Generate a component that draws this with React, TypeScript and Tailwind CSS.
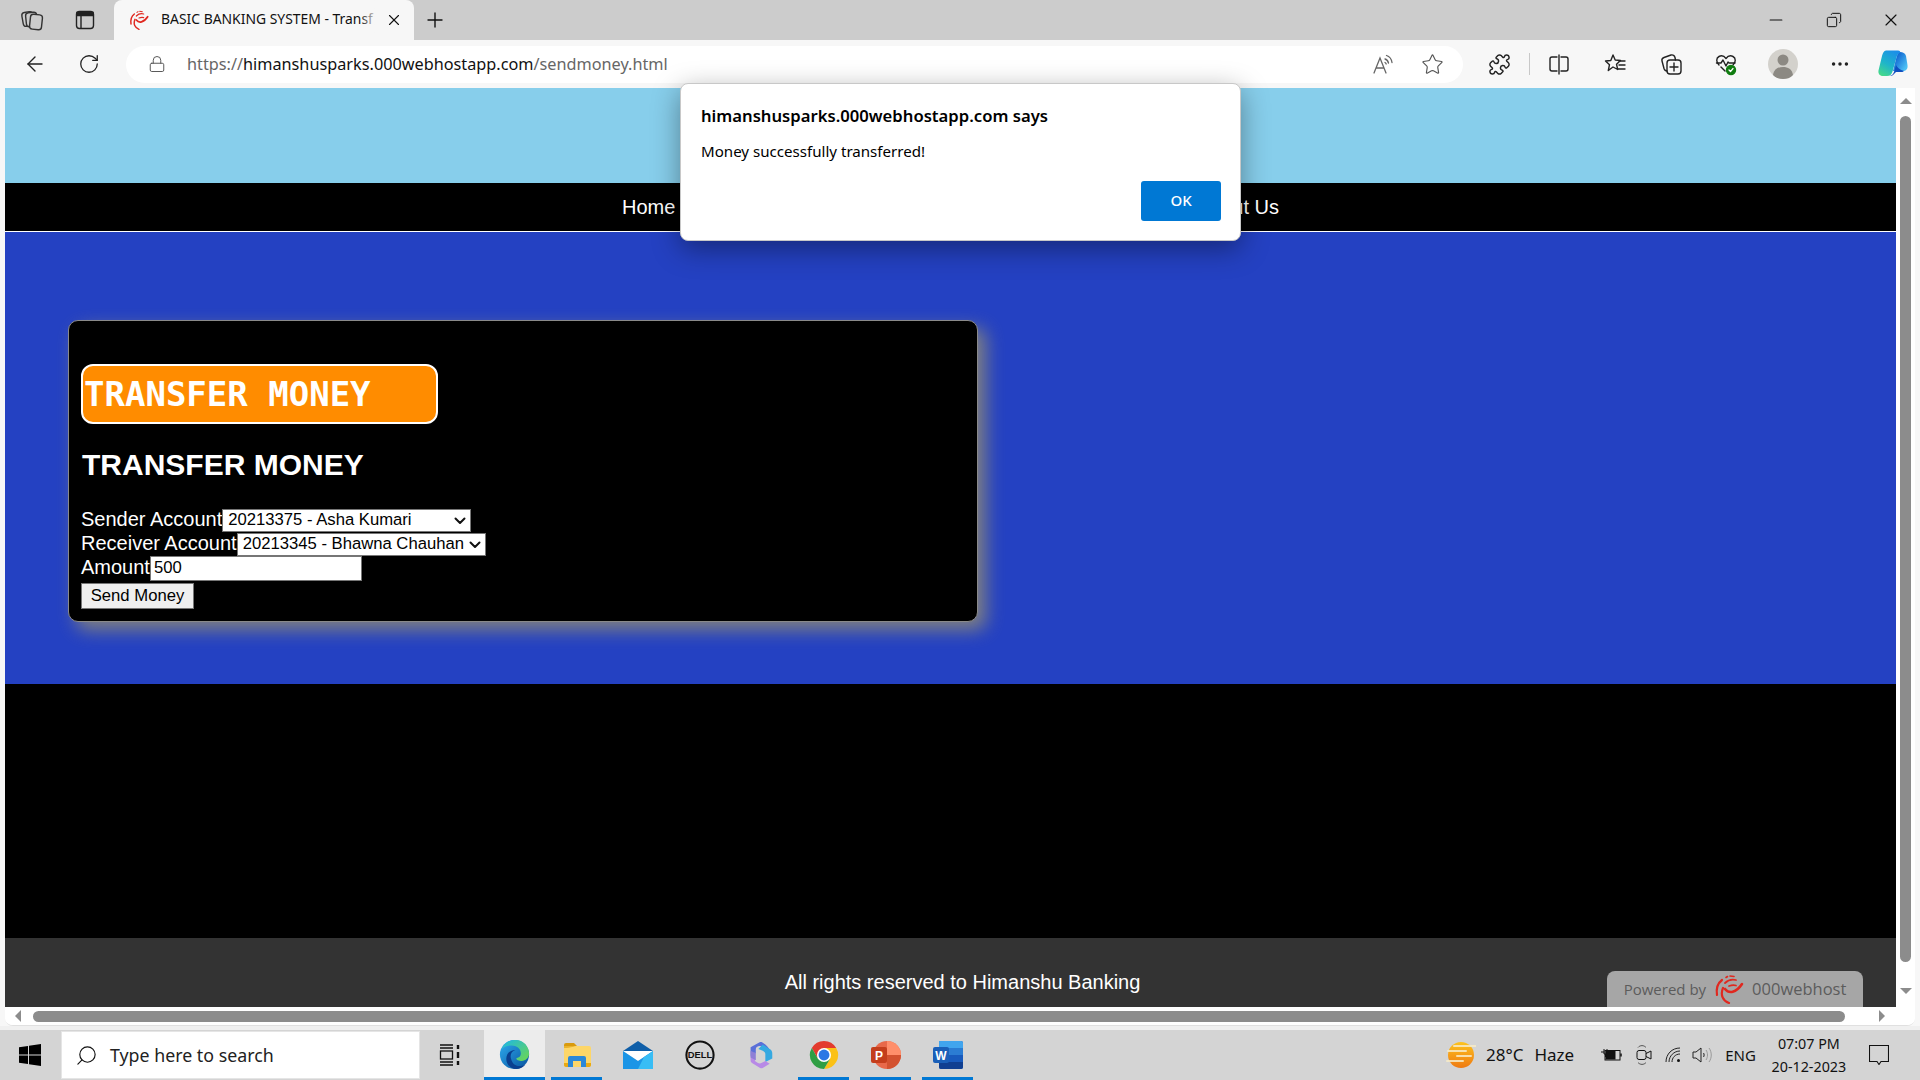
import React from "react";
import { ArrowLeft, RotateCw, Lock, Star, Plus, X, Minus, Puzzle, MoreHorizontal, Search, Copy } from "lucide-react";

const stroke = { fill: "none", stroke: "currentColor", strokeWidth: 1.4, strokeLinecap: "round" as const, strokeLinejoin: "round" as const };

function Swirl({ size = 20 }: { size?: number }) {
  return (
    <svg width={size} height={size} viewBox="0 0 30 30" fill="none" stroke="#e0281f" strokeLinecap="round">
      <path d="M3 21C2 14 4 9 8 6" strokeWidth="2.200" />
      <path d="M15 29C9 27 6 21 9 14" strokeWidth="2.200" />
      <path d="M11 15c4 5 11 4 17-5" strokeWidth="2.600" />
      <path d="M11 9c3-3 7-4 11-3" strokeWidth="1.800" />
      <path d="M16 2l4 .5" strokeWidth="1.600" />
      <path d="M12 3.500l1.500-1" strokeWidth="1.600" />
      <path d="M15 12c3-1 5-1 7-.5" strokeWidth="1.800" />
    </svg>
  );
}

function TabsIcon() {
  return (
    <svg width="24" height="24" viewBox="0 0 24 24" fill="#cccccc" stroke="#333" strokeWidth="1.400">
      <rect x="2.500" y="4" width="11" height="14" rx="3" transform="rotate(-10 8 11)" />
      <rect x="6" y="4.500" width="11" height="14" rx="3" transform="rotate(-6 11.500 11.500)" />
      <rect x="10" y="6.500" width="12" height="15" rx="3" transform="rotate(6 16 14)" />
    </svg>
  );
}

function VerticalTabs() {
  return (
    <svg width="24" height="24" viewBox="0 0 24 24" fill="none" stroke="#222" strokeWidth="1.400">
      <rect x="3.500" y="3.500" width="17" height="17" rx="3" />
      <path d="M4 4.500h16v3H4z" fill="#222" />
      <path d="M8 8v12" />
    </svg>
  );
}

function HeartPulse() {
  return (
    <svg width="24" height="24" viewBox="0 0 24 24" {...stroke} className="text-[#222]">
      <path d="M5 13C2 10 2 6 5 4.500 8 3 10.500 4.500 12 6.500 13.500 4.500 16 3 19 4.500c3 1.500 3 5.500 0 8.500" />
      <path d="M2.500 11H7l2-3 3 6 2-4 1 1h6" />
      <path d="M7 15l4 4" />
      <circle cx="17" cy="18" r="4.500" fill="#107c10" stroke="#107c10" />
      <path d="M15 18l1.500 1.500 2.500-3" stroke="#fff" strokeWidth="1.200" />
    </svg>
  );
}

function Profile() {
  return (
    <svg width="30" height="30" viewBox="0 0 30 30">
      <circle cx="15" cy="15" r="15" fill="#d3d1cc" />
      <circle cx="15" cy="11" r="5.500" fill="#8c8983" />
      <path d="M5 26c1-6 5-8 10-8s9 2 10 8c-3 3-6 4-10 4s-7-1-10-4z" fill="#8c8983" />
    </svg>
  );
}

function Copilot() {
  return (
    <svg width="30" height="28" viewBox="0 0 30 28">
      <defs>
        <linearGradient id="cpa" x1="0.7" y1="0" x2="0.2" y2="1">
          <stop offset="0" stopColor="#1b8fe8" />
          <stop offset="0.55" stopColor="#1fb5c9" />
          <stop offset="1" stopColor="#45d98a" />
        </linearGradient>
        <linearGradient id="cpb" x1="0.2" y1="0.2" x2="0.9" y2="0.8">
          <stop offset="0" stopColor="#0f62d0" />
          <stop offset="1" stopColor="#4cc0f5" />
        </linearGradient>
      </defs>
      <path d="M22 2c3 0 5 1 6 4l1.500 9c.500 4-1.500 6-5 6H15l3-12c.800-3 2-6 3-7z" fill="url(#cpb)" />
      <path d="M8 .5h12c2 0 2.500 1 2 2-2 1-3 3-3.500 5l-4 14c-1 3-2.500 4.500-5.500 4.500H5c-3.500 0-5-2.500-4.500-5.500L4 6c.700-3 2-5.500 4-5.500z" fill="url(#cpa)" />
      <path d="M11 26c2.500 0 4-1.500 5-4l2-7c1 2 4 5 8 6-1 1-2 1-3 1h-5l-3 3c-1 1-2 1-4 1z" fill="#0f4fc0" />
    </svg>
  );
}

function ReadAloud() {
  return (
    <svg width="24" height="24" viewBox="0 0 24 24" fill="none" stroke="#666" strokeWidth="1.300" strokeLinecap="round">
      <path d="M3 21l6-15 6 15M5.500 16h7" />
      <path d="M14 7c2 .5 3 2 3.500 4M15.500 3.500c3 1 5 3.500 5.500 7M14 10.500c.7.300 1 .800 1.200 1.500" />
    </svg>
  );
}

function Favs() {
  return (
    <svg width="24" height="24" viewBox="0 0 24 24" {...stroke} className="text-[#222]">
      <path d="M10 3l2.200 5 5.300.500-4 3.700 1.200 5.300L10 15l-4.700 3.500 1.200-5.800-4-3.700 5.300-.500z" />
      <path d="M16 9h6M16 13h6M15 17h7" />
    </svg>
  );
}

function Collections() {
  return (
    <svg width="24" height="24" viewBox="0 0 24 24" {...stroke} className="text-[#222]">
      <rect x="8" y="8" width="14" height="14" rx="3" />
      <path d="M15 11v8M11 15h8" />
      <path d="M8 19c-1.500 0-2.500-1-3-2.500L3 9c-.500-2 .500-3 2-3.500L12 3c2-.500 3.500.500 4 2.500L16.500 8" />
    </svg>
  );
}

function SplitScreen() {
  return (
    <svg width="24" height="24" viewBox="0 0 24 24" {...stroke} className="text-[#222]">
      <path d="M10 5H5a2 2 0 0 0-2 2v10a2 2 0 0 0 2 2h5M14 5h5a2 2 0 0 1 2 2v10a2 2 0 0 1-2 2h-5" />
      <path d="M12 3v19" />
    </svg>
  );
}

function WinLogo() {
  return (
    <svg width="22" height="22" viewBox="0 0 22 22" fill="#000">
      <path d="M0 3.200 9 2v8.500H0zM10 1.800 22 0v10.500H10zM0 11.500h9V20l-9-1.300zM10 11.500h12V22l-12-1.800z" />
    </svg>
  );
}

function TaskView() {
  return (
    <svg width="24" height="24" viewBox="0 0 24 24" fill="none" stroke="#111" strokeWidth="1.300">
      <path d="M2 2h13M2 22h13M2 5h13M2 19h13" />
      <rect x="2.500" y="8" width="12" height="8" />
      <path d="M20 2v4M20 9v6M20 18v4" strokeWidth="2.400" />
    </svg>
  );
}

function EdgeIcon() {
  return (
    <svg width="31" height="31" viewBox="0 0 34 34">
      <defs>
        <linearGradient id="eg1" x1="0" y1="0.2" x2="0.8" y2="1">
          <stop offset="0" stopColor="#2aa4e8" />
          <stop offset="1" stopColor="#0c59a4" />
        </linearGradient>
        <linearGradient id="eg2" x1="0" y1="0" x2="1" y2="1">
          <stop offset="0" stopColor="#1bb7e8" />
          <stop offset="1" stopColor="#6fd84b" />
        </linearGradient>
      </defs>
      <circle cx="17" cy="17" r="16" fill="url(#eg1)" />
      <path d="M3 11C6 4 12 1 18 1c9 0 15 7 15 15 0 5-4 8-8 8-3 0-6-1-6-3 3-.500 5-2 5-5 0-6-5-9-10-9-5 0-9 2-11 4z" fill="url(#eg2)" />
      <path d="M13 21c-1-4 1-8 5-9-6 0-10 4-10 10 0 6 5 11 11 11 4 0 8-2 10-5-4 2-8 2-10 1-3-1-5-4-6-8z" fill="#0a3f8f" />
    </svg>
  );
}

function FolderIcon() {
  return (
    <svg width="28" height="24" viewBox="0 0 28 24">
      <path d="M1 2a2 2 0 0 1 2-2h8l3 3H1z" fill="#d99a0c" />
      <path d="M1 3h25a2 2 0 0 1 2 2v17a2 2 0 0 1-2 2H3a2 2 0 0 1-2-2z" fill="#fdd668" />
      <path d="M1 5c8 0 10-2 13-2H1z" fill="#e9b22c" />
      <path d="M5 24V15a2 2 0 0 1 2-2h14a2 2 0 0 1 2 2v9h-5v-6h-8v6z" fill="#2b88d8" />
      <path d="M1 20h4v4H3c-1 0-2-1-2-2zM23 20h5v2c0 1-1 2-2 2h-3z" fill="#e9a912" />
    </svg>
  );
}

function MailIcon() {
  return (
    <svg width="30" height="28" viewBox="0 0 30 28">
      <path d="M15 0 30 10H0z" fill="#0f5ea8" />
      <path d="M0 10h30L15 20z" fill="#fff" />
      <path d="M0 10l15 10 15-10v18H0z" fill="#1b95e6" />
      <path d="M30 10v18H15L21 16z" fill="#38bdf5" />
    </svg>
  );
}

function DellIcon() {
  return (
    <svg width="30" height="30" viewBox="0 0 32 32">
      <circle cx="16" cy="16" r="14.500" fill="none" stroke="#111" strokeWidth="2.200" />
      <text x="16" y="19.500" textAnchor="middle" fontFamily="Liberation Sans, sans-serif" fontWeight="700" fontSize="10" fill="#111">DELL</text>
    </svg>
  );
}

function M365Icon() {
  return (
    <svg width="26" height="28" viewBox="0 0 30 32">
      <path d="M14 1 3 7v10l6-3V9c0-2 3-4 6-3l10 4c-1-2-3-4-5-6l-3-2c-1-1-2-1-3-1z" fill="#5a6fd8" />
      <path d="M17 4l8 5c2 1 3 3 3 5v6l-8 4v-9c0-2-1-3-3-4l-5-2z" fill="#36a9e1" />
      <path d="M3 16v6c0 2 1 3 3 4l8 5c1 .500 2 .500 3 0l8-5-5-3-4 2c-2 1-3 1-5 0l-3-2V13z" fill="#b88ae6" />
      <path d="M3 11l6 3v8l-6-3z" fill="#8e7fd6" />
    </svg>
  );
}

function ChromeIcon() {
  return (
    <svg width="30" height="30" viewBox="0 0 32 32">
      <path d="M3 8.500A15 15 0 0 1 29 8.500H16L9.500 20z" fill="#e33b2e" />
      <path d="M29 8.500A15 15 0 0 1 16 31L22.500 20 16 8.500z" fill="#fbc116" />
      <path d="M16 31A15 15 0 0 1 3 8.500L9.500 20h13z" fill="#2f9e44" />
      <circle cx="16" cy="16" r="7.500" fill="#fff" />
      <circle cx="16" cy="16" r="5.800" fill="#2b78e4" />
    </svg>
  );
}

function PptIcon() {
  return (
    <svg width="30" height="28" viewBox="0 0 30 28">
      <circle cx="16" cy="14" r="14" fill="#e8694a" />
      <path d="M16 0a14 14 0 0 1 14 14H16z" fill="#ff8f6b" />
      <path d="M16 28a14 14 0 0 0 14-14H16z" fill="#d35230" />
      <rect x="0" y="6" width="16" height="16" rx="2" fill="#c43e1c" />
      <text x="8" y="18.500" textAnchor="middle" fontFamily="Liberation Sans, sans-serif" fontWeight="700" fontSize="12" fill="#fff">P</text>
    </svg>
  );
}

function WordIcon() {
  return (
    <svg width="30" height="28" viewBox="0 0 30 28">
      <rect x="6" y="0" width="24" height="28" rx="2" fill="#185abd" />
      <path d="M6 0h22a2 2 0 0 1 2 2v5H6z" fill="#41a5ee" />
      <path d="M6 7h24v7H6z" fill="#2b7cd3" />
      <path d="M6 21h24v5a2 2 0 0 1-2 2H8a2 2 0 0 1-2-2z" fill="#103f91" />
      <rect x="0" y="6" width="16" height="16" rx="2" fill="#1a5fb8" />
      <text x="8" y="18.500" textAnchor="middle" fontFamily="Liberation Sans, sans-serif" fontWeight="700" fontSize="12" fill="#fff">W</text>
    </svg>
  );
}

function WeatherIcon() {
  return (
    <svg width="30" height="28" viewBox="0 0 30 28">
      <defs>
        <linearGradient id="wx" x1="0" y1="0" x2="0" y2="1">
          <stop offset="0" stopColor="#fdc31f" />
          <stop offset="1" stopColor="#ef7a12" />
        </linearGradient>
      </defs>
      <circle cx="15" cy="14" r="13" fill="url(#wx)" />
      <path d="M8 5h22M2 10h18M11 15h14M1 20h16" stroke="#f8ecc8" strokeWidth="2" strokeLinecap="round" opacity=".85" />
    </svg>
  );
}

function BatteryIcon() {
  return (
    <svg width="21" height="14" viewBox="0 0 21 14" fill="none" stroke="#111" strokeWidth="1">
      <path d="M0 4h3M3 1v5h3V1M4.500 6v3" />
      <rect x="4" y="2.500" width="15" height="9.500" />
      <rect x="5" y="3.500" width="9" height="7.500" fill="#111" />
      <path d="M20 5.500v3" strokeWidth="1.500" />
    </svg>
  );
}

function MeetIcon() {
  return (
    <svg width="16" height="22" viewBox="0 0 16 22" fill="none" stroke="#111" strokeWidth="1">
      <rect x="1" y="6.500" width="9" height="9" rx="2" />
      <path d="M10 9.500l5-2.500v8l-5-2.500" />
      <path d="M2 3.500C4 1 8 1 10 3.500M2 18.500c2 2.500 6 2.500 8 0" stroke="#555" />
    </svg>
  );
}

function WifiIcon() {
  return (
    <svg width="16" height="16" viewBox="0 0 16 16" fill="none" stroke="#222" strokeWidth="1">
      <path d="M1 15C1 7 7 1 15 1M4 15c0-6 5-11 11-11M7 15c0-4 3-8 8-8" />
      <circle cx="13.500" cy="13.500" r="1.500" fill="#111" stroke="none" />
    </svg>
  );
}

function SpeakerIcon() {
  return (
    <svg width="21" height="18" viewBox="0 0 21 18" fill="none" stroke="#222" strokeWidth="1">
      <path d="M1 6v6h3l5 4V2L4 6z" />
      <path d="M11.500 7c.800 1 .800 3 0 4" />
      <path d="M14 4c2 3 2 7 0 10M17 2c3 4 3 10 0 14" stroke="#999" />
    </svg>
  );
}

function ChatIcon() {
  return (
    <svg width="20" height="20" viewBox="0 0 20 20" fill="none" stroke="#111" strokeWidth="1.100">
      <path d="M.5.500h19v16H12l-2 3-2-3H.5z" />
    </svg>
  );
}

function Chevron() {
  return (
    <svg width="12" height="8" viewBox="0 0 12 8" fill="none" stroke="#111" strokeWidth="2" strokeLinecap="round" strokeLinejoin="round" className="pointer-events-none absolute right-[5px] top-[8px]">
      <path d="M1.500 1.500 6 6l4.500-4.500" />
    </svg>
  );
}

function Slot({ w = 24, ml = 0, children }: { w?: number; ml?: number; children: React.ReactNode }) {
  return (
    <div className="flex shrink-0 items-center justify-center" style={{ width: w, marginLeft: ml }}>
      {children}
    </div>
  );
}

function TabStrip() {
  return (
    <div className="flex h-10 shrink-0 items-center bg-[#cccccc] pl-[20px] text-[#111]">
      <Slot><TabsIcon /></Slot>
      <Slot ml={29}><VerticalTabs /></Slot>
      <div className="relative ml-[17px] flex h-10 w-[300px] items-center rounded-t-lg bg-[#f7f7f7] pl-[15px]">
        <Swirl size={20} />
        <span className="ml-[12px] w-[216px] whitespace-nowrap pb-[2px] text-[13.900px] text-[#111]">BASIC BANKING SYSTEM - Transf</span>
        <div className="absolute left-[246px] top-0 h-10 w-[18px] bg-gradient-to-r from-transparent to-[#f7f7f7]" />
        <X size={18} strokeWidth={1.5} className="ml-[8px] text-[#111]" />
      </div>
      <Slot ml={9}><Plus size={24} strokeWidth={1.4} /></Slot>
      <div className="ml-auto flex">
        <Slot w={58}><Minus size={20} strokeWidth={1.400} /></Slot>
        <Slot w={57}><Copy size={16} strokeWidth={1.500} className="-scale-x-100" /></Slot>
        <Slot w={58}><X size={20} strokeWidth={1.400} /></Slot>
      </div>
    </div>
  );
}

function Toolbar() {
  return (
    <div className="flex h-12 shrink-0 items-center bg-[#f7f7f7] pl-[23px] text-[#222]">
      <Slot><ArrowLeft size={24} strokeWidth={1.4} /></Slot>
      <Slot ml={30}><RotateCw size={22} strokeWidth={1.4} /></Slot>
      <div className="ml-[25px] flex h-[37px] w-[1337px] items-center rounded-full bg-white pl-[22px]">
        <Lock size={18} strokeWidth={1.3} className="text-[#555]" />
        <span className="ml-[21px] whitespace-nowrap text-[16.250px] text-[#666]">
          https://<span className="text-[#111]">himanshusparks.000webhostapp.com</span>/sendmoney.html
        </span>
        <div className="ml-auto flex items-center pr-[19px]">
          <Slot><ReadAloud /></Slot>
          <Slot ml={25}><Star size={23} strokeWidth={1.2} className="text-[#555]" /></Slot>
        </div>
      </div>
      <Slot ml={24}><Puzzle size={23} strokeWidth={1.5} /></Slot>
      <div className="ml-[18px] h-[22px] w-px bg-[#c8c8c8]" />
      <Slot ml={17}><SplitScreen /></Slot>
      <Slot ml={32}><Favs /></Slot>
      <Slot ml={32}><Collections /></Slot>
      <Slot ml={31}><HeartPulse /></Slot>
      <Slot w={30} ml={30}><Profile /></Slot>
      <Slot ml={30}><MoreHorizontal size={22} strokeWidth={1.8} /></Slot>
      <Slot w={30} ml={26}><Copilot /></Slot>
    </div>
  );
}

const arial = "font-['Liberation_Sans',Arial,sans-serif]";

function Card() {
  return (
    <div className="ml-[63px] mt-[88px] h-[302px] w-[910px] rounded-[10px] border border-[#8a8a8a] bg-black pl-[12px] pt-[43px] text-white shadow-[8px_8px_18px_#808080]">
      <div className="flex h-[60px] w-[357px] items-center rounded-[12px] border-2 border-white bg-[#ff8c00] pl-[1px] font-['DejaVu_Sans_Mono',monospace] text-[34px] font-bold leading-none">
        TRANSFER MONEY
      </div>
      <h2 className="mt-[21px] h-[40px] pl-px text-[30px] font-bold leading-[40px]">TRANSFER MONEY</h2>
      <div className="mt-[22px] flex h-[24px] items-center text-[20px] leading-none">
        <span>Sender Account</span>
        <div className="relative mt-[2px]">
          <select defaultValue="a" className="block h-[23px] w-[249px] appearance-none rounded-none border border-[#767676] bg-white pl-[5px] text-[16.670px] leading-none text-black">
            <option value="a">20213375 - Asha Kumari</option>
          </select>
          <Chevron />
        </div>
      </div>
      <div className="flex h-[24px] items-center text-[20px] leading-none">
        <span>Receiver Account</span>
        <div className="relative mt-[2px]">
          <select defaultValue="b" className="block h-[23px] w-[249px] appearance-none rounded-none border border-[#767676] bg-white pl-[5px] text-[16.670px] leading-none text-black">
            <option value="b">20213345 - Bhawna Chauhan</option>
          </select>
          <Chevron />
        </div>
      </div>
      <div className="flex h-[24px] items-center text-[20px] leading-none">
        <span>Amount</span>
        <input readOnly value="500" className="mt-[2px] h-[25px] w-[212px] border border-[#767676] bg-white pl-[3px] text-[16.670px] text-black" />
      </div>
      <button className="mt-[4px] h-[26px] w-[113px] border border-[#767676] bg-[#efefef] text-[16.670px] leading-none text-black">Send Money</button>
    </div>
  );
}

function Page() {
  return (
    <div className={`relative flex w-[1891px] flex-col overflow-hidden ${arial}`}>
      <div className="h-[95px] bg-[#87ceeb]" />
      <nav className="h-[49px] border-b border-white bg-black text-[20px] text-white">
        <div className="mx-auto flex h-full w-[657px] items-center justify-between">
          <span>Home</span>
          <span>Customers</span>
          <span>Transfer</span>
          <span>About Us</span>
        </div>
      </nav>
      <section className="h-[452px] bg-[#2441c2]"><Card /></section>
      <div className="h-[254px] bg-black" />
      <footer className="flex h-[69px] items-center justify-center bg-[#333333] pl-[24px] pt-[18px] text-[20px] text-white">
        All rights reserved to Himanshu Banking
      </footer>
      <div className="absolute bottom-0 left-[1602px] flex h-[36px] w-[256px] items-center justify-center gap-[8px] rounded-t-[8px] bg-[#a6a6a6] text-[#5c5c5c]">
        <span className="font-['Open_Sans',sans-serif] text-[15px] font-medium">Powered by</span>
        <Swirl size={30} />
        <span className="font-['Open_Sans',sans-serif] text-[16.500px] font-medium">000webhost</span>
      </div>
    </div>
  );
}

function VerticalScrollbar() {
  return (
    <div className="flex w-[19px] shrink-0 flex-col items-center bg-white pt-[10px]">
      <div className="h-0 w-0 border-x-[6px] border-b-[6px] border-x-transparent border-b-[#8c8c8c]" />
      <div className="mt-[12px] h-[846px] w-[11px] rounded-full bg-[#8c8c8c]" />
      <div className="mt-[26px] h-0 w-0 border-x-[6px] border-t-[6px] border-x-transparent border-t-[#8c8c8c]" />
    </div>
  );
}

function HorizontalScrollbar() {
  return (
    <div className="flex h-[19px] w-[1891px] items-center bg-white pl-[10px]">
      <div className="h-0 w-0 border-y-[6px] border-r-[6px] border-y-transparent border-r-[#8c8c8c]" />
      <div className="ml-[12px] h-[11px] w-[1812px] rounded-full bg-[#8c8c8c]" />
      <div className="ml-[34px] h-0 w-0 border-y-[6px] border-l-[6px] border-y-transparent border-l-[#8c8c8c]" />
    </div>
  );
}

function Tile({ w, ml, active, bar, children }: { w: number; ml: number; active?: boolean; bar?: boolean; children: React.ReactNode }) {
  return (
    <div className={`relative flex h-[50px] shrink-0 items-center justify-center pb-[1px] ${active ? "bg-[#ececec]" : ""}`} style={{ width: w, marginLeft: ml }}>
      {children}
      {bar && <div className="absolute bottom-0 left-0 h-[3px] w-full bg-[#0078d4]" />}
    </div>
  );
}

function Taskbar() {
  return (
    <div className="flex h-[50px] shrink-0 items-center bg-[#d4d4d4] pl-[19px] font-['Noto_Sans',sans-serif] text-[#111]">
      <WinLogo />
      <div className="ml-[20px] flex h-[48px] w-[359px] items-center border border-[#e5e5e5] bg-white pl-[13px]">
        <Search size={23} strokeWidth={1.2} className="-scale-x-100" />
        <span className="ml-[12px] text-[17.800px] text-[#222]">Type here to search</span>
      </div>
      <Slot ml={18}><TaskView /></Slot>
      <Tile w={61} ml={22} active bar><EdgeIcon /></Tile>
      <Tile w={51} ml={6} bar><FolderIcon /></Tile>
      <Tile w={51} ml={10}><MailIcon /></Tile>
      <Tile w={51} ml={11}><DellIcon /></Tile>
      <Tile w={51} ml={10}><M365Icon /></Tile>
      <Tile w={51} ml={12} bar><ChromeIcon /></Tile>
      <Tile w={51} ml={11} bar><PptIcon /></Tile>
      <Tile w={51} ml={11} bar><WordIcon /></Tile>
      <div className="ml-[473px]"><WeatherIcon /></div>
      <span className="ml-[10px] text-[17px]">28°C</span>
      <span className="ml-[11px] text-[17px]">Haze</span>
      <div className="ml-[27px]"><BatteryIcon /></div>
      <div className="ml-[14px]"><MeetIcon /></div>
      <div className="ml-[13px]"><WifiIcon /></div>
      <div className="ml-[11px]"><SpeakerIcon /></div>
      <span className="ml-[12px] text-[15px]">ENG</span>
      <div className="ml-[15px] flex w-[76px] flex-col items-center text-[14.300px] leading-[23px]">
        <span>07:07 PM</span>
        <span>20-12-2023</span>
      </div>
      <div className="ml-[22px]"><ChatIcon /></div>
    </div>
  );
}

function Alert() {
  return (
    <div className="absolute left-[680px] top-[83px] flex h-[158px] w-[561px] flex-col rounded-[8px] border border-[#c8c8c8] bg-white pl-[20px] pr-[19px] pt-[18px] font-['Noto_Sans',sans-serif] text-black shadow-[0_8px_28px_rgba(0,0,0,0.38)]">
      <div className="text-[16.650px] font-semibold leading-[28px]">himanshusparks.000webhostapp.com says</div>
      <div className="mt-[7px] text-[15.100px] leading-[28px]">Money successfully transferred!</div>
      <div className="mt-auto flex justify-end pb-[19px]">
        <button className="h-[40px] w-[80px] rounded-[3px] bg-[#0078d4] pb-[1px] text-[15px] font-medium text-white">OK</button>
      </div>
    </div>
  );
}

export default function App() {
  return (
    <div className="relative flex h-[1080px] w-[1920px] flex-col overflow-hidden bg-[#f7f7f7] font-['Noto_Sans',sans-serif]">
      <TabStrip />
      <Toolbar />
      <div className="flex h-[938px] shrink-0 pl-[5px]">
        <div className="flex w-[1910px] overflow-hidden rounded-b-lg border-b border-[#e0e0e0] bg-white">
          <div className="flex flex-col">
            <div className="flex h-[919px] w-[1891px]"><Page /></div>
            <HorizontalScrollbar />
          </div>
          <VerticalScrollbar />
        </div>
      </div>
      <div className="h-[4px] shrink-0 bg-[#f0f0f0]" />
      <Taskbar />
      <Alert />
    </div>
  );
}
